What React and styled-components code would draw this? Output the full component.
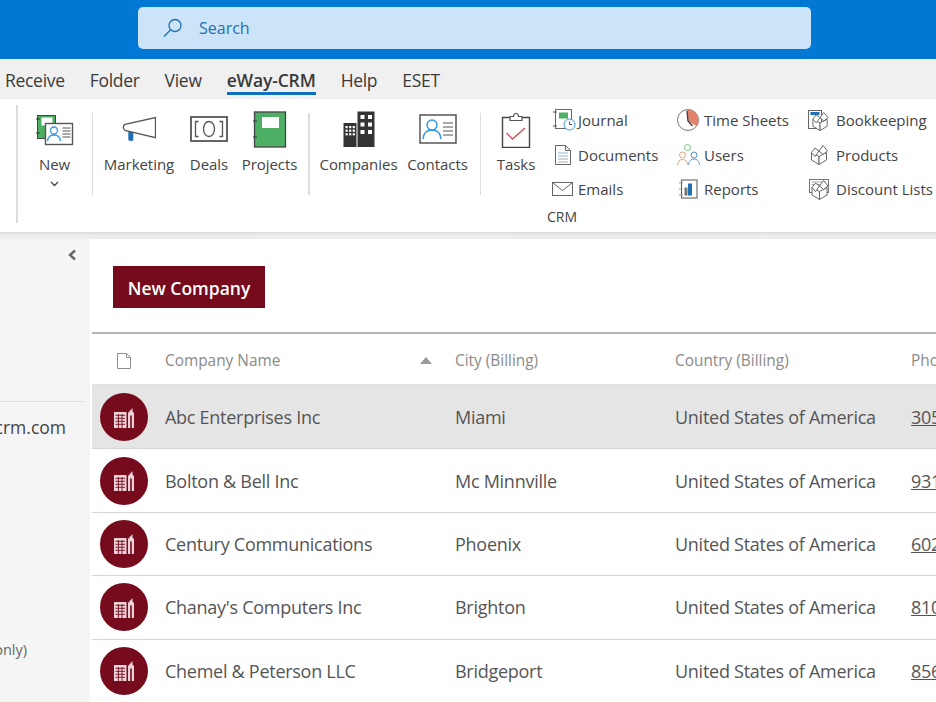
import styled, { createGlobalStyle } from 'styled-components';

const GlobalStyle = createGlobalStyle`
  html, body { margin: 0; padding: 0; }
  body {
    width: 936px;
    height: 702px;
    overflow: hidden;
    font-family: "Open Sans", "Noto Sans", sans-serif;
    background: #fff;
    color: #444;
  }
`

const Page = styled.div`
  width: 936px;
  height: 702px;
  overflow: hidden;
  display: flex;
  flex-direction: column;
`

const TitleBar = styled.div`
  height: 59px;
  flex: none;
  background: #0078d4;
  padding: 7px 0 0 138px;
  box-sizing: border-box;
`

const SearchBox = styled.div`
  width: 673px;
  height: 42px;
  background: #cce4f7;
  border-radius: 5px;
  display: flex;
  align-items: center;
  gap: 16px;
  padding-left: 25px;
  box-sizing: border-box;
  color: #1f6fb5;
  font-size: 16px;
`

const Tabs = styled.div`
  height: 40px;
  flex: none;
  background: #f0f0f0;
  display: flex;
  gap: 25px;
  padding-left: 5px;
  box-sizing: border-box;
`

const Tab = styled.div`
  height: 33px;
  line-height: 42px;
  font-size: 17.5px;
  letter-spacing: ${({ $active }) => ($active ? -0.15 : -0.3)}px;
  color: #3a3a3a;
  font-weight: ${({ $active }) => ($active ? 600 : 400)};
  border-bottom: 3px solid ${({ $active }) => ($active ? '#106ebe' : 'transparent')};
`

const Ribbon = styled.div`
  height: 133px;
  flex: none;
  background: #fff;
  display: flex;
  overflow: hidden;
  padding-left: 16px;
  box-sizing: border-box;
`

const Divider = styled.div`
  width: 1.5px;
  flex: none;
  background: #dcdcdc;
  height: ${({ $h }) => $h}px;
  margin-top: ${({ $top }) => $top}px;
  margin-left: ${({ $ml }) => $ml || 0}px;
`

const LargeButton = styled.div`
  flex: none;
  width: ${({ $w }) => $w}px;
  margin-left: ${({ $ml }) => $ml || 0}px;
  display: flex;
  flex-direction: column;
  align-items: center;
  font-size: 15px;
  letter-spacing: -0.05px;
  color: #444;
`

const LargeIcon = styled.div`
  height: 44px;
  margin-top: 8px;
  display: flex;
  align-items: center;
  justify-content: center;
`

const LargeLabel = styled.div`
  height: 24px;
  line-height: 24px;
  margin-top: 1px;
  white-space: nowrap;
`

const MoreArrow = styled.div`
  margin-top: 5px;
  line-height: 0;
`

const SmallGroup = styled.div`
  flex: none;
  margin-left: 18px;
  display: flex;
  flex-direction: column;
  padding-top: 4px;
`

const SmallColumns = styled.div`
  display: flex;
`

const SmallColumn = styled.div`
  width: ${({ $w }) => $w}px;
  flex: none;
`

const SmallItem = styled.div`
  height: 34.5px;
  display: flex;
  align-items: center;
  font-size: 15px;
  letter-spacing: 0;
  color: #444;
  white-space: nowrap;
`

const SmallIcon = styled.div`
  width: ${({ $w }) => $w}px;
  flex: none;
  display: flex;
  padding-left: ${({ $pad }) => $pad || 0}px;
  box-sizing: border-box;
`

const GroupLabel = styled.div`
  font-size: 14px;
  color: #444;
  margin: 0 0 0 -5px;
  line-height: 20px;
`

const RibbonEdge = styled.div`
  height: 7px;
  flex: none;
  background: linear-gradient(#d8d8d8, #ececec 40%, #eeeeee);
`

const Body = styled.div`
  flex: 1;
  display: flex;
  min-height: 0;
`

const Sidebar = styled.div`
  width: 90px;
  flex: none;
  background: #f5f5f5;
  overflow: hidden;
  display: flex;
  flex-direction: column;
`

const Collapse = styled.div`
  height: 162px;
  flex: none;
  padding: 5px 0 0 67px;
  box-sizing: border-box;
`

const SideLine = styled.div`
  width: 84px;
  height: 1px;
  flex: none;
  background: #dedede;
`

const SideText = styled.div`
  display: flex;
  justify-content: flex-end;
  white-space: nowrap;
  flex: none;
  padding-right: ${({ $right }) => $right}px;
  margin-top: ${({ $top }) => $top}px;
  font-size: ${({ $size }) => $size}px;
  line-height: 24px;
  color: ${({ $color }) => $color};
`

const Main = styled.div`
  flex: 1;
  min-width: 0;
  background: #fff;
  padding-left: 2px;
  overflow: hidden;
`

const Toolbar = styled.div`
  height: 93px;
  padding: 27px 0 0 21px;
  box-sizing: border-box;
`

const PrimaryButton = styled.div`
  width: 152px;
  height: 42px;
  background: #750b1c;
  color: #fff;
  font-size: 17.5px;
  font-weight: 600;
  line-height: 44px;
  text-align: center;
`

const Table = styled.div`
  border-top: 2px solid #b4b4b4;
`

const columns = '73px 290px 220px 236px 200px'

const HeadRow = styled.div`
  display: grid;
  grid-template-columns: ${columns};
  height: 52px;
  padding-top: 3px;
  box-sizing: border-box;
  align-items: center;
  font-size: 15.4px;
  color: #8a8a8a;
  border-bottom: 2px solid #e2e2e2;
`

const HeadCell = styled.div`
  display: flex;
  align-items: center;
  justify-content: ${({ $center }) => ($center ? 'center' : 'space-between')};
  padding-right: ${({ $center }) => ($center ? 9 : 23)}px;
  white-space: nowrap;
  overflow: hidden;
`

const Row = styled.div`
  display: grid;
  grid-template-columns: ${columns};
  height: 62.4px;
  align-items: center;
  font-size: 18px;
  letter-spacing: -0.27px;
  color: #555;
  background: ${({ $selected }) => ($selected ? '#e5e5e5' : '#fff')};
  border-bottom: 1px solid #d6d6d6;
`

const Cell = styled.div`
  white-space: nowrap;
  overflow: hidden;
`

const PhoneCell = styled(Cell)`
  text-decoration: underline;
`

const Avatar = styled.div`
  width: 48px;
  height: 48px;
  margin-left: 8px;
  border-radius: 50%;
  background: #750b1c;
  display: flex;
  align-items: center;
  justify-content: center;
`

const SortArrow = styled.span`
  width: 0;
  height: 0;
  border-left: 6.5px solid transparent;
  border-right: 6.5px solid transparent;
  border-bottom: 7px solid #999;
`

const SearchIcon = () => (
  <svg width="20" height="20" viewBox="0 0 20 20" fill="none" stroke="#1f6fb5" strokeWidth="1.3">
    <circle cx="12" cy="7.5" r="6" />
    <path d="M7.6 11.8 1 18.5" />
  </svg>
)

const NewIcon = () => (
  <svg width="38" height="34" viewBox="0 0 38 34">
    <rect x="1.5" y="3.5" width="18" height="23" fill="#4caf64" stroke="#444" />
    <rect x="5.5" y="5.5" width="11" height="8" fill="#fff" />
    <path d="M0 7h4M0 21h4" stroke="#333" />
    <rect x="9.5" y="11.5" width="27" height="21" fill="#fff" stroke="#555" strokeWidth="1.4" />
    <circle cx="18" cy="18.5" r="3.5" fill="none" stroke="#2f96e8" strokeWidth="1.3" />
    <path d="M11.5 29c.5-4 3-6 6.5-6s6 2 6.500 6" fill="none" stroke="#2f96e8" strokeWidth="1.3" />
    <path d="M26.500 16h8M26.500 19h8M26.500 22h8M26.500 25h8" stroke="#555" />
  </svg>
)

const MarketingIcon = () => (
  <svg width="34" height="26" viewBox="0 0 34 26">
    <path d="M6.300 15.700h5v8.500c-1.500 1.200-3.500 1-5-.2z" fill="#1e6fb3" />
    <path d="M33.500 1.500v20.200L3 14.300C.8 13.300.8 9.300 3 8.300z" fill="#fff" stroke="#555" strokeWidth="1.300" />
  </svg>
)

const DealsIcon = () => (
  <svg width="38" height="26" viewBox="0 0 38 26" fill="none" stroke="#555">
    <rect x="1" y="1" width="36" height="24" strokeWidth="1.800" />
    <path d="M8.500 5.500H5.500v15h3M29.500 5.500h3v15h-3" strokeWidth="1.300" />
    <ellipse cx="19" cy="13" rx="5.500" ry="7.500" strokeWidth="1.300" />
  </svg>
)

const ProjectsIcon = () => (
  <svg width="34" height="37" viewBox="0 0 34 37">
    <rect x="1.500" y="1" width="31" height="35" fill="#4caf64" stroke="#444" strokeWidth="1.300" />
    <rect x="9" y="6" width="17" height="11" fill="#fff" />
    <path d="M0 10h4M0 26h4" stroke="#333" />
  </svg>
)

const windows = (cols, rows, x0, y0, step, size) => {
  const out = []
  for (let r = 0; r < rows; r++) {
    for (let c = 0; c < cols; c++) {
      out.push(<rect key={`${r}-${c}`} x={x0 + c * step} y={y0 + r * step} width={size} height={size} fill="#fff" />)
    }
  }
  return out
}

const CompaniesIcon = () => (
  <svg width="32" height="36" viewBox="0 0 32 36">
    <rect x="0.500" y="12" width="13" height="24" fill="#333" />
    <rect x="14.500" y="0.500" width="17" height="35.500" fill="#333" />
    {windows(3, 3, 2.500, 15, 3.600, 2.200)}
    {windows(2, 3, 17.500, 4, 7.500, 4)}
  </svg>
)

const ContactsIcon = () => (
  <svg width="38" height="30" viewBox="0 0 38 30">
    <rect x="1" y="1" width="36" height="28" fill="#fff" stroke="#555" strokeWidth="1.500" />
    <circle cx="13" cy="11" r="5" fill="none" stroke="#2f96e8" strokeWidth="1.400" />
    <path d="M4 25c.5-6 4-9 9-9s8.500 3 9 9" fill="none" stroke="#2f96e8" strokeWidth="1.400" />
    <path d="M24 9h10M24 13h10M24 17h10M24 21h10" stroke="#555" strokeWidth="1.200" />
  </svg>
)

const TasksIcon = () => (
  <svg width="30" height="37" viewBox="0 0 30 37" fill="none">
    <path d="M9.500 6.500H1.500v30h27v-30h-8" fill="#fff" stroke="#444" strokeWidth="1.400" />
    <path d="M9 9.500V5.500h3.500c0-4 5-4 5 0H21v4z" fill="#fff" stroke="#555" strokeWidth="1.200" />
    <path d="M5.500 22l6 6L24 17" stroke="#d8525a" strokeWidth="1.500" />
  </svg>
)

const JournalIcon = () => (
  <svg width="23" height="22" viewBox="0 0 23 22" fill="none">
    <rect x="2.500" y="0.500" width="16" height="19" fill="#fff" stroke="#666" />
    <rect x="6" y="3.500" width="9" height="6" fill="#4caf64" />
    <path d="M0 3h4M0 17h4" stroke="#555" />
    <circle cx="16.500" cy="15.500" r="5.500" fill="#fff" stroke="#2f96e8" />
    <path d="M16.500 12.500v3h2.500" stroke="#555" />
  </svg>
)

const DocumentIcon = () => (
  <svg width="16" height="20" viewBox="0 0 16 20" fill="none">
    <path d="M.5.500h10l5 5v14H.5z" fill="#fff" stroke="#666" />
    <path d="M10.500.500v5h5" stroke="#666" />
    <path d="M3 8h10M3 11h10" stroke="#8db9e0" />
    <path d="M3 14h10M3 17h10" stroke="#aaa" />
  </svg>
)

const MailIcon = () => (
  <svg width="21" height="14" viewBox="0 0 21 14" fill="none" stroke="#666">
    <rect x="0.500" y="0.500" width="20" height="13" fill="#fff" />
    <path d="M.5.500l10 8 10-8" />
  </svg>
)

const ClockIcon = () => (
  <svg width="22" height="22" viewBox="0 0 22 22">
    <circle cx="11" cy="11" r="10.500" fill="#fff" stroke="#777" />
    <path d="M10 .6A10.500 10.500 0 0 1 19.600 17L11.500 12.500z" fill="#e2826c" />
    <path d="M10 2l1 10 4.500 5" fill="none" stroke="#444" strokeWidth="1.400" />
  </svg>
)

const UsersIcon = () => (
  <svg width="23" height="22" viewBox="0 0 23 22" fill="none">
    <circle cx="10.500" cy="3.500" r="3" stroke="#7cc08a" />
    <circle cx="5.500" cy="11" r="3" stroke="#f0a36e" />
    <circle cx="17" cy="11" r="3" stroke="#5b93c9" />
    <path d="M.5 21c.5-3.500 2-5.500 5-5.500s4.500 2 5 5.500" stroke="#f0a36e" />
    <path d="M11.500 21c.5-4 2.500-6 5.500-6s5 2 5.500 6" stroke="#5b93c9" />
  </svg>
)

const ReportsIcon = () => (
  <svg width="19" height="20" viewBox="0 0 19 20" fill="none">
    <rect x="2.500" y="1" width="15.500" height="18" fill="#fff" stroke="#555" />
    <path d="M0 4h4M0 10h4M0 16h4" stroke="#999" />
    <rect x="5.500" y="8.500" width="3" height="8" fill="#777" />
    <rect x="9" y="4.500" width="4" height="12" fill="#1e6fb3" />
  </svg>
)

// open carton used by the three product icons, drawn in an 18x20 box
const Box = () => (
  <g stroke="#666" strokeLinejoin="round">
    <path d="M1.500 7.500 9 11.500v8l-7.500-4.500z" fill="#fff" />
    <path d="M16.500 7.500 9 11.500v8l7.500-4.500z" fill="#fff" />
    <path d="M1.500 7.500 5 3l4 3-4 5.500zM9 6l4-5.500 4.500 5.500-4.500 3.500z" fill="#fff" />
  </g>
)

const BookkeepingIcon = () => (
  <svg width="21" height="21" viewBox="0 0 21 21">
    <rect x="0.500" y="0.500" width="13" height="18" fill="#fff" stroke="#666" />
    <rect x="2.500" y="2" width="9" height="3" fill="#1e6fb3" />
    <g transform="translate(3.500 2) scale(.95)"><Box /></g>
  </svg>
)

const ProductIcon = () => (
  <svg width="18" height="20" viewBox="0 0 18 20">
    <Box />
  </svg>
)

const DiscountIcon = () => (
  <svg width="21" height="21" viewBox="0 0 21 21">
    <rect x="0.500" y="0.500" width="19" height="13" fill="#fff" stroke="#777" />
    <path d="M2.500 3h15M2.500 5.500h15" stroke="#aaa" />
    <g transform="translate(1.500 1)"><Box /></g>
  </svg>
)

const BuildingIcon = () => (
  <svg width="20" height="21" viewBox="0 0 20 21">
    <path d="M0 5h12.500v16H0z" fill="#ecd3d8" />
    <path d="M14 6 18.500 1v3.500L20 6v15h-6z" fill="#ecd3d8" />
    <path d="M1.500 8.300h9.500M1.500 11.300h9.500M1.500 14.300h9.500M1.500 17.300h9.500M4.400 7v14M8 7v14" stroke="#750b1c" strokeWidth="0.900" />
    <path d="M17 8.500V21" stroke="#750b1c" strokeWidth="1.600" />
  </svg>
)

const ChevronDown = () => (
  <svg width="9" height="6" viewBox="0 0 9 6" fill="none" stroke="#444" strokeWidth="1.300">
    <path d="M1 1l3.500 3.500L8 1" />
  </svg>
)

const ChevronLeft = () => (
  <svg width="10" height="12" viewBox="0 0 10 12" fill="none" stroke="#666" strokeWidth="2.400">
    <path d="M8 1.500L3 6l5 4.500" />
  </svg>
)

const FileIcon = () => (
  <svg width="14" height="16" viewBox="0 0 14 16" fill="none" stroke="#8f8f8f">
    <path d="M.5.500h9l4 4v11H.5z" />
    <path d="M9.500.500v4h4" />
  </svg>
)

const tabs = ['Receive', 'Folder', 'View', 'eWay-CRM', 'Help', 'ESET']

const smallColumns = [
  {
    width: 124,
    iconWidth: 26,
    items: [
      { label: 'Journal', icon: <JournalIcon />, pad: 1 },
      { label: 'Documents', icon: <DocumentIcon />, pad: 3 },
      { label: 'Emails', icon: <MailIcon /> },
    ],
  },
  {
    width: 132,
    iconWidth: 28,
    items: [
      { label: 'Time Sheets', icon: <ClockIcon />, pad: 1 },
      { label: 'Users', icon: <UsersIcon />, pad: 1 },
      { label: 'Reports', icon: <ReportsIcon />, pad: 3 },
    ],
  },
  {
    width: 130,
    iconWidth: 28,
    items: [
      { label: 'Bookkeeping', icon: <BookkeepingIcon /> },
      { label: 'Products', icon: <ProductIcon />, pad: 2 },
      { label: 'Discount Lists', icon: <DiscountIcon />, pad: 1 },
    ],
  },
]

const companies = [
  { name: 'Abc Enterprises Inc', city: 'Miami', phone: '305-555-0142' },
  { name: 'Bolton & Bell Inc', city: 'Mc Minnville', phone: '931-555-0117' },
  { name: 'Century Communications', city: 'Phoenix', phone: '602-555-0180' },
  { name: "Chanay's Computers Inc", city: 'Brighton', phone: '810-555-0136' },
  { name: 'Chemel & Peterson LLC', city: 'Bridgeport', phone: '856-555-0159' },
]

const App = () => {
  return (
    <Page>
      <GlobalStyle />
      <TitleBar>
        <SearchBox>
          <SearchIcon />
          <span>Search</span>
        </SearchBox>
      </TitleBar>
      <Tabs>
        {tabs.map((tab) => (
          <Tab key={tab} $active={tab === 'eWay-CRM'}>{tab}</Tab>
        ))}
      </Tabs>
      <Ribbon>
        <Divider $h={118} $top={6} />
        <LargeButton $w={74}>
          <LargeIcon><NewIcon /></LargeIcon>
          <LargeLabel>New</LargeLabel>
          <MoreArrow><ChevronDown /></MoreArrow>
        </LargeButton>
        <Divider $h={82} $top={14} />
        <LargeButton $w={72} $ml={10}>
          <LargeIcon><MarketingIcon /></LargeIcon>
          <LargeLabel>Marketing</LargeLabel>
        </LargeButton>
        <LargeButton $w={40} $ml={14}>
          <LargeIcon><DealsIcon /></LargeIcon>
          <LargeLabel>Deals</LargeLabel>
        </LargeButton>
        <LargeButton $w={55} $ml={13}>
          <LargeIcon><ProjectsIcon /></LargeIcon>
          <LargeLabel>Projects</LargeLabel>
        </LargeButton>
        <Divider $h={82} $top={14} $ml={11} />
        <LargeButton $w={78} $ml={10}>
          <LargeIcon><CompaniesIcon /></LargeIcon>
          <LargeLabel>Companies</LargeLabel>
        </LargeButton>
        <LargeButton $w={62} $ml={9}>
          <LargeIcon><ContactsIcon /></LargeIcon>
          <LargeLabel>Contacts</LargeLabel>
        </LargeButton>
        <Divider $h={82} $top={14} $ml={11} />
        <LargeButton $w={36} $ml={17}>
          <LargeIcon><TasksIcon /></LargeIcon>
          <LargeLabel>Tasks</LargeLabel>
        </LargeButton>
        <SmallGroup>
          <SmallColumns>
            {smallColumns.map((col) => (
              <SmallColumn key={col.items[0].label} $w={col.width}>
                {col.items.map((item) => (
                  <SmallItem key={item.label}>
                    <SmallIcon $w={col.iconWidth} $pad={item.pad}>{item.icon}</SmallIcon>
                    {item.label}
                  </SmallItem>
                ))}
              </SmallColumn>
            ))}
          </SmallColumns>
          <GroupLabel>CRM</GroupLabel>
        </SmallGroup>
      </Ribbon>
      <RibbonEdge />
      <Body>
        <Sidebar>
          <Collapse><ChevronLeft /></Collapse>
          <SideLine />
          <SideText $size={17.5} $color="#444" $right={24} $top={13}>info@eway-crm.com</SideText>
          <SideText $size={14.5} $color="#666" $right={63} $top={199}>(read only)</SideText>
        </Sidebar>
        <Main>
          <Toolbar>
            <PrimaryButton>New Company</PrimaryButton>
          </Toolbar>
          <Table>
            <HeadRow>
              <HeadCell $center><FileIcon /></HeadCell>
              <HeadCell>Company Name<SortArrow /></HeadCell>
              <HeadCell>City (Billing)</HeadCell>
              <HeadCell>Country (Billing)</HeadCell>
              <HeadCell>Phone</HeadCell>
            </HeadRow>
            {companies.map((company, index) => (
              <Row key={company.name} $selected={index === 0}>
                <Avatar><BuildingIcon /></Avatar>
                <Cell>{company.name}</Cell>
                <Cell>{company.city}</Cell>
                <Cell>United States of America</Cell>
                <PhoneCell>{company.phone}</PhoneCell>
              </Row>
            ))}
          </Table>
        </Main>
      </Body>
    </Page>
  )
}

export default App;
